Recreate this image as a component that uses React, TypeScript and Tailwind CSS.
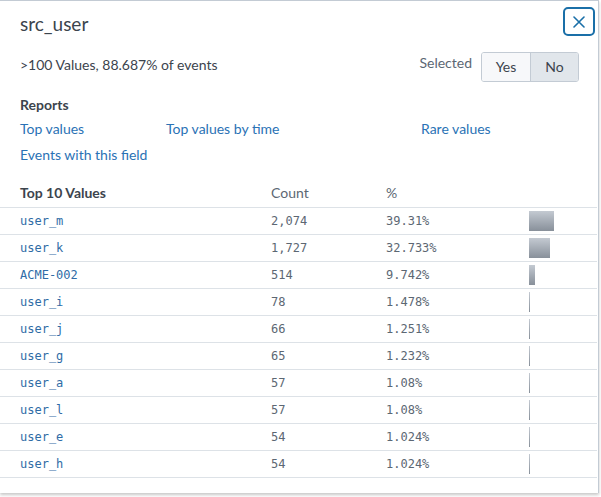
import React from "react";

const rows = [
  { value: "user_m", count: "2,074", pct: "39.31%", p: 39.31 },
  { value: "user_k", count: "1,727", pct: "32.733%", p: 32.733 },
  { value: "ACME-002", count: "514", pct: "9.742%", p: 9.742 },
  { value: "user_i", count: "78", pct: "1.478%", p: 1.478 },
  { value: "user_j", count: "66", pct: "1.251%", p: 1.251 },
  { value: "user_g", count: "65", pct: "1.232%", p: 1.232 },
  { value: "user_a", count: "57", pct: "1.08%", p: 1.08 },
  { value: "user_l", count: "57", pct: "1.08%", p: 1.08 },
  { value: "user_e", count: "54", pct: "1.024%", p: 1.024 },
  { value: "user_h", count: "54", pct: "1.024%", p: 1.024 },
];

export default function App() {
  return (
    <div className="w-[601px] h-[497px] bg-white font-['Lato',sans-serif] text-[#3c444d]">
      <div className="w-[599px] bg-white border-t border-r border-[#c3cbd4] shadow-[0_2px_3px_rgba(0,0,0,0.22)] pb-[15px]">
        {/* header */}
        <div className="flex items-start justify-between pl-5 pr-[3px] pt-[6px]">
          <h2 className="mt-[5px] text-[19px] leading-[24px] font-normal">src_user</h2>
          <button className="w-[32px] h-[29px] flex items-center justify-center border-2 border-[#1a6fa8] rounded-[5px] text-[#1a6fa8]">
            <svg width="12" height="12" viewBox="0 0 12 12" fill="none" stroke="currentColor" strokeWidth="1.6" strokeLinecap="round">
              <path d="M1 1L11 11M11 1L1 11" />
            </svg>
          </button>
        </div>

        {/* summary + selected toggle */}
        <div className="flex items-start justify-between pl-5 pr-[19px] mt-[16px] text-[14px] leading-[20px]">
          <p className="mt-[3px]">&gt;100 Values, 88.687% of events</p>
          <div className="flex items-start gap-[9px]">
            <span className="mt-[1px] text-[#5c6773]">Selected</span>
            <div className="flex h-[30px] border border-[#c3cbd4] rounded-[3px] overflow-hidden">
              <button className="w-[49px] bg-[#f7f8fa] text-[#3c444d] border-r border-[#c3cbd4]">Yes</button>
              <button className="w-[47px] bg-[#e1e6eb] text-[#3c444d]">No</button>
            </div>
          </div>
        </div>

        {/* reports */}
        <div className="pl-5 mt-[13px] text-[14px] leading-[20px]">
          <h3 className="font-bold">Reports</h3>
          <div className="grid grid-cols-[146px_255px_1fr] gap-y-[6px] mt-[4px] text-[#2a72b5]">
            <a>Top values</a>
            <a>Top values by time</a>
            <a>Rare values</a>
            <a className="col-span-3">Events with this field</a>
          </div>
        </div>

        {/* top values table */}
        <div className="mt-[18px] mr-[1px] text-[14px]">
          <div className="grid grid-cols-[271px_115px_143px_1fr] leading-[20px] pb-[4px] border-b border-[#dde2e7]">
            <span className="pl-5 font-bold">Top 10 Values</span>
            <span className="text-[#5c6773]">Count</span>
            <span className="text-[#5c6773]">%</span>
            <span />
          </div>
          {rows.map((r) => (
            <div
              key={r.value}
              className="grid grid-cols-[271px_115px_143px_1fr] h-[27px] items-center border-b border-[#dde2e7] font-['DejaVu_Sans_Mono',monospace] text-[12px] leading-[24px]"
            >
              <span className="pl-5 pb-[1px] text-[#2f6ca6]">{r.value}</span>
              <span className="pb-[1px] text-[#5c6773]">{r.count}</span>
              <span className="pb-[1px] text-[#5c6773]">{r.pct}</span>
              <div className="flex items-center h-[26px]">
                <div
                  className="h-[20px] bg-gradient-to-b from-[#c4cad2] to-[#88909a]"
                  style={{ width: `${Math.max(1, Math.round(r.p * 0.64))}px` }}
                />
              </div>
            </div>
          ))}
        </div>
      </div>
    </div>
  );
}
